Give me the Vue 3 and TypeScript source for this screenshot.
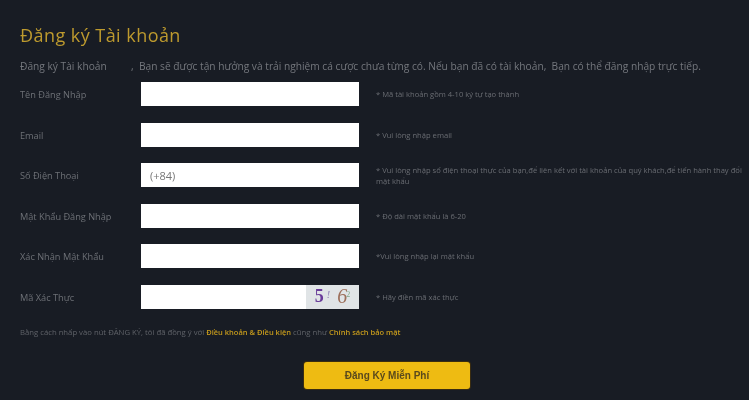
<script setup lang="ts">
interface Row {
  label: string
  hint: string
  value?: string
  captcha?: boolean
}
const rows: Row[] = [
  { label: 'Tên Đăng Nhập', hint: '* Mã tài khoản gồm 4-10 ký tự tạo thành' },
  { label: 'Email', hint: '* Vui lòng nhập email' },
  { label: 'Số Điện Thoại', value: '(+84)', hint: '* Vui lòng nhập số điện thoại thực của bạn,để liên kết với tài khoản của quý khách,để tiến hành thay đổi mật khẩu' },
  { label: 'Mật Khẩu Đăng Nhập', hint: '* Độ dài mật khẩu là 6-20' },
  { label: 'Xác Nhận Mật Khẩu', hint: '*Vui lòng nhập lại mật khẩu' },
  { label: 'Mã Xác Thực', hint: '* Hãy điền mã xác thực', captcha: true },
]
</script>

<template>
  <div class="page">
    <h1 class="title">Đăng ký Tài khoản</h1>
    <p class="intro"><span class="intro-name">Đăng ký Tài khoản</span><span>,&nbsp; Bạn sẽ được tận hưởng và trải nghiệm cá cược chưa từng có. Nếu bạn đã có tài khoản,&nbsp; Bạn có thể đăng nhập trực tiếp.</span></p>
    <div class="rows">
      <div v-for="row in rows" :key="row.label" class="row">
        <div class="label">{{ row.label }}</div>
        <div class="field">
          <span v-if="row.value" class="value">{{ row.value }}</span>
          <div v-if="row.captcha" class="captcha">
            <span class="d1">5</span><span class="d2">!</span><span class="d3">6</span><span class="d4">2</span>
          </div>
        </div>
        <div class="hint">{{ row.hint }}</div>
      </div>
    </div>
    <p class="terms">Bằng cách nhấp vào nút ĐĂNG KÝ, tôi đã đồng ý với <b>Điều khoản &amp; Điều kiện</b> cũng như <b>Chính sách bảo mật</b></p>
    <div class="actions"><button class="submit" type="button">Đăng Ký Miễn Phí</button></div>
  </div>
</template>

<style>
html, body { margin: 0; background: #181c24; overflow: hidden; }
</style>

<style scoped>
.page {
  box-sizing: border-box;
  width: 749px;
  height: 400px;
  padding: 23px 6px 0 20px;
  background: #181c24;
  font-family: "Liberation Sans", Arial, sans-serif;
  color: #7c7f85;
  filter: blur(0.5px);
  overflow: hidden;
}
.title {
  margin: 0;
  font-family: "Open Sans", sans-serif;
  font-size: 18px;
  line-height: 24px;
  font-weight: 400;
  letter-spacing: 0.45px;
  color: #bd9a2e;
}
.intro {
  display: flex;
  margin: 11px 0 0;
  font-family: "Open Sans", sans-serif;
  font-size: 10.2px;
  line-height: 16px;
  white-space: nowrap;
  color: #74777d;
}
.intro-name { width: 111px; flex: none; }
.rows {
  display: flex;
  flex-direction: column;
  gap: 16.6px;
  margin-top: 8px;
}
.row {
  display: flex;
  align-items: center;
  height: 24px;
}
.label {
  width: 121px;
  flex: none;
  padding-top: 1px;
  font-family: "Open Sans", sans-serif;
  font-size: 9.2px;
  color: #6d7076;
}
.field {
  position: relative;
  display: flex;
  align-items: center;
  justify-content: space-between;
  box-sizing: border-box;
  width: 218px;
  height: 24px;
  flex: none;
  padding-left: 9px;
  background: #fff;
}
.value {
  font-family: "Open Sans", sans-serif;
  font-size: 11px;
  color: #777;
}
.captcha {
  position: absolute;
  top: 0;
  right: 0;
  display: flex;
  align-items: center;
  justify-content: center;
  width: 53px;
  height: 24px;
  background: #e0e4e6;
  font-family: "Liberation Serif", serif;
  font-size: 18px;
}
.d1 { color: #6a3d9a; font-weight: 700; }
.d2 { margin: 0 7px 4px 3px; font-size: 10px; color: #8a7ab0; font-style: italic; }
.d3 { color: #9c6f5a; font-style: italic; font-size: 20px; }
.d4 { margin: 0 0 4px -1px; font-size: 8px; color: #7fa88a; }
.hint {
  flex: 1;
  min-width: 0;
  margin-left: 17px;
  padding-top: 1px;
  font-size: 7.6px;
  line-height: 11px;
  font-family: "Open Sans", sans-serif;
  color: #6a6d73;
}
.terms {
  margin: 17px 0 0;
  font-family: "Open Sans", sans-serif;
  font-size: 7.72px;
  line-height: 12px;
  color: #5f6268;
}
.terms b { font-weight: 600; font-size: 7.5px; color: #c59a1c; }
.actions {
  display: flex;
  margin-top: 24px;
  padding-left: 284px;
}
.submit {
  width: 166px;
  height: 27px;
  padding: 0;
  border: 0;
  border-radius: 3px;
  background: #eebb12;
  box-shadow: 0 0 0 1px #3a2c10;
  font-family: "Liberation Sans", Arial, sans-serif;
  font-size: 10px;
  font-weight: 700;
  color: #5a4a1c;
}
</style>
